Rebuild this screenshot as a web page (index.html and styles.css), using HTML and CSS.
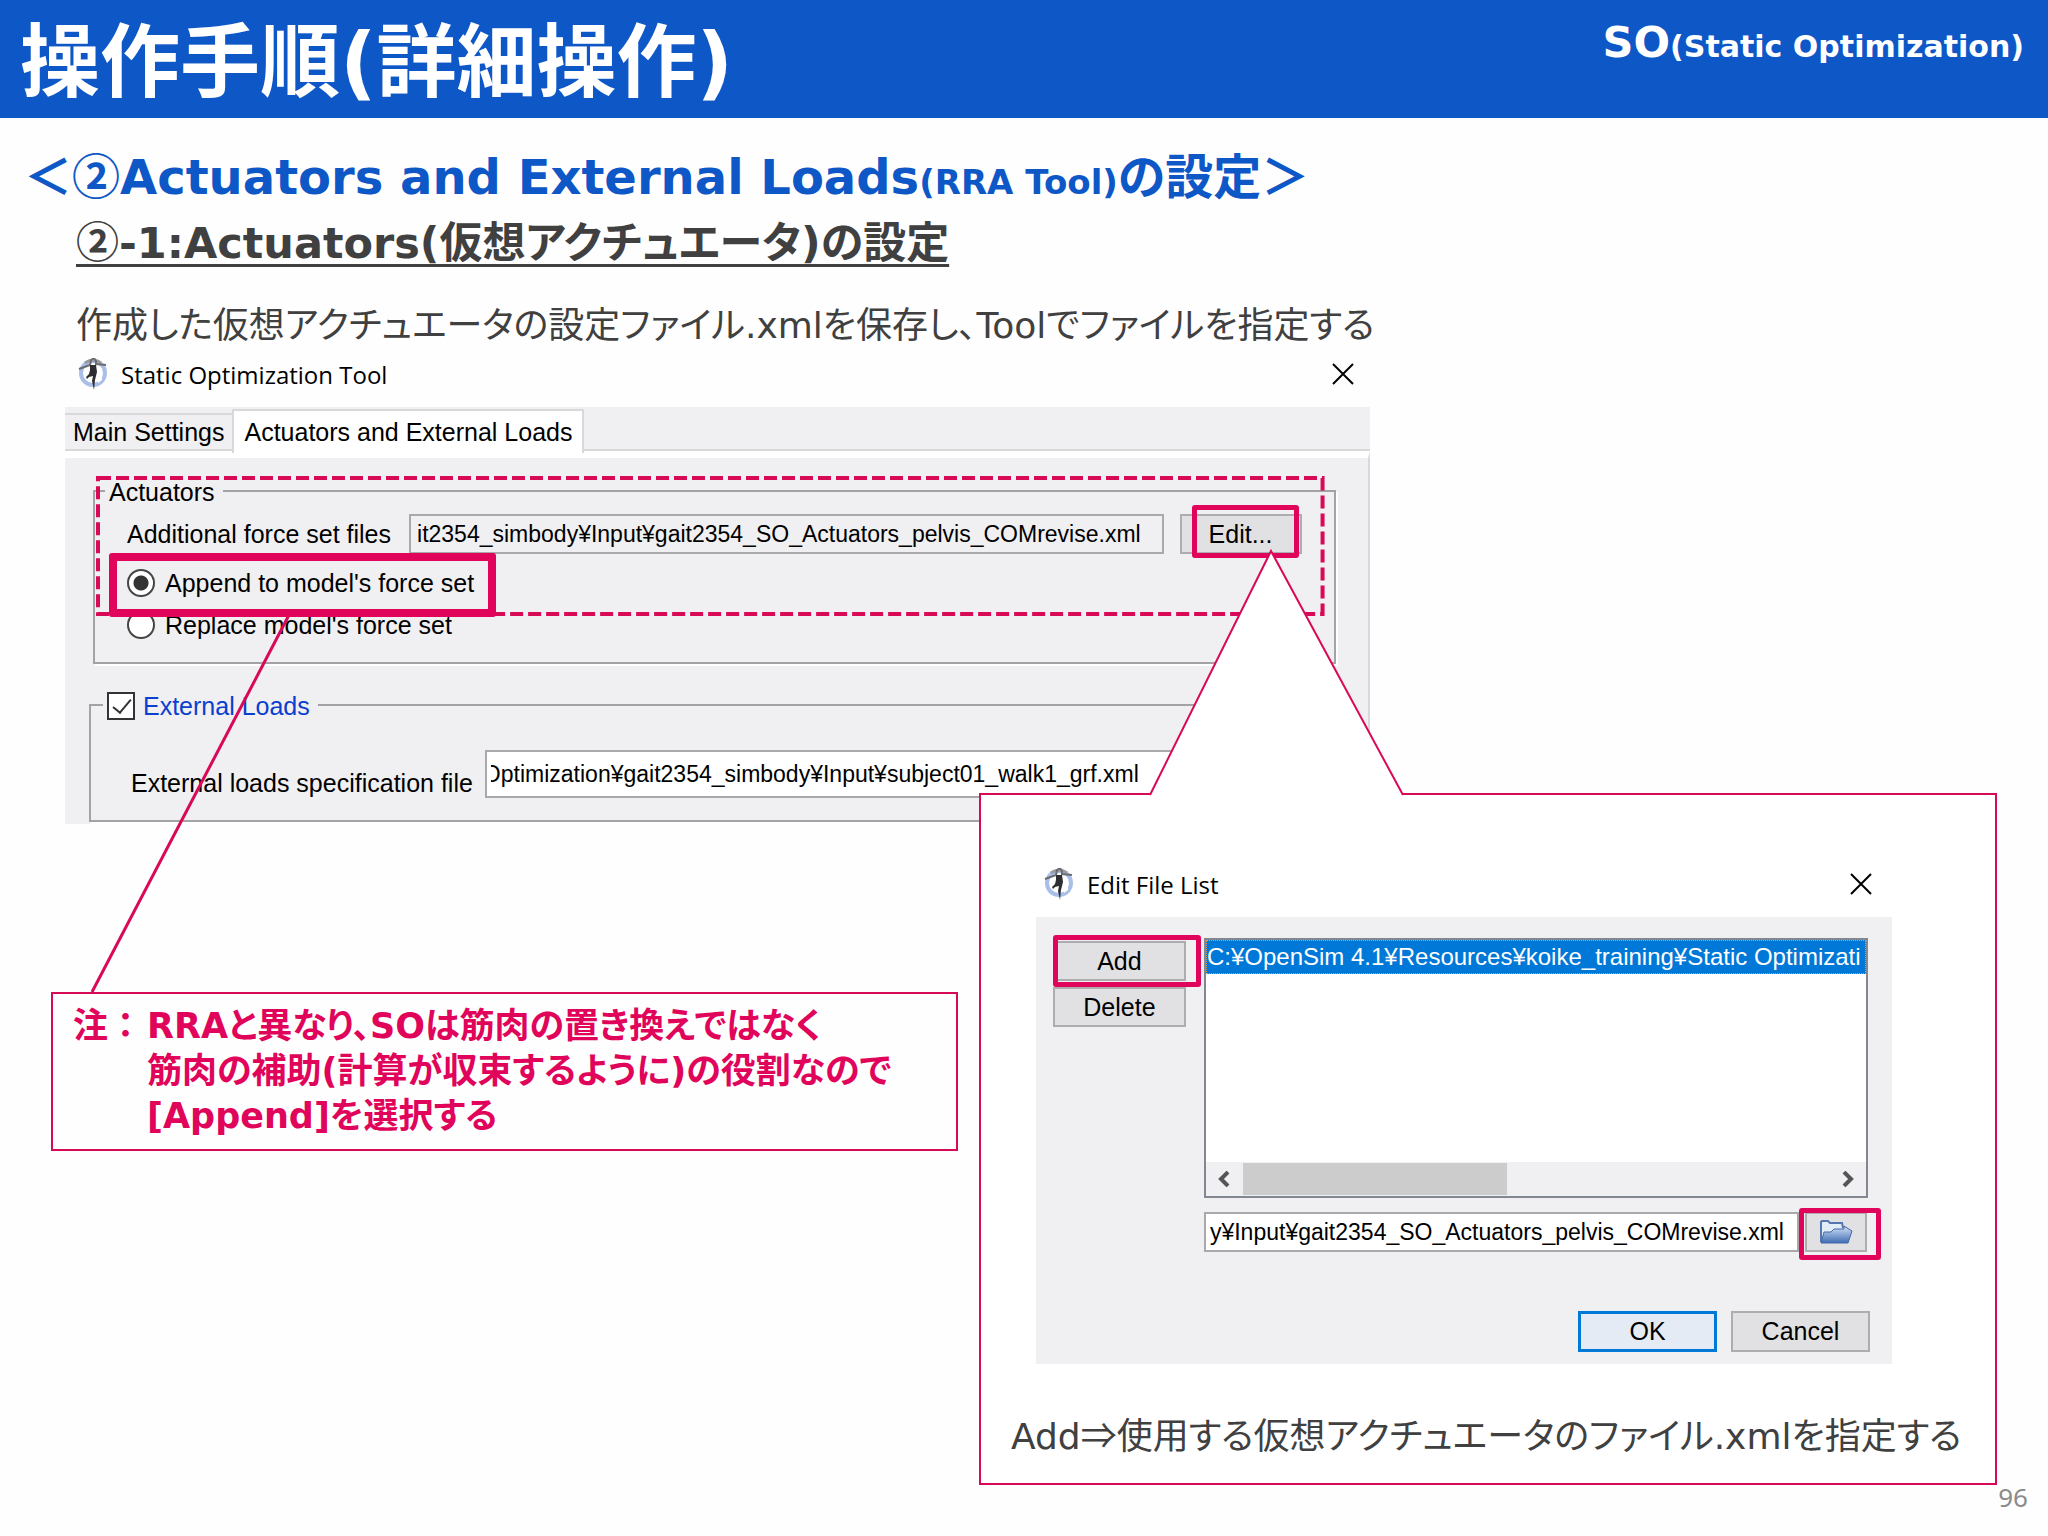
FILE: index.html
```html
<!DOCTYPE html>
<html lang="ja">

<head>
  <meta charset="UTF-8">
  <meta name="viewport" content="width=device-width, initial-scale=1.0">
  <title>操作手順(詳細操作)</title>
  <link rel="stylesheet" href="styles.css">
</head>

<body>

  <header class="topbar">
    <h1>操作手順(詳細操作)</h1>
    <p class="chapter">SO<small>(Static Optimization)</small></p>
  </header>

  <main>
    <div class="intro">
      <h2>＜<span class="cjk">②</span>Actuators and External Loads<small>(RRA Tool)</small>の設定＞</h2>
      <h3><span class="cjk">②</span>-1:Actuators(仮想アクチュエータ)の設定</h3>
      <p class="lead">作成した仮想アクチュエータの設定ファイル.xmlを保存し、Toolでファイルを指定する</p>
    </div>

    <div class="stage">
      <div class="left">

        <!-- Static Optimization Tool -->
        <section class="window tool">
          <div class="titlebar">
            <svg class="app-icon" viewBox="0 0 30 32" aria-hidden="true">
              <circle cx="15" cy="15" r="12" fill="#fff" stroke="#a9bfe8" stroke-width="4"/>
              <path d="M7 5a13 13 0 0 1 16 0" fill="none" stroke="#9a9aa0" stroke-width="3"/>
              <path d="M1 11l11-4 1-5 3-2 2 3v3l10 1" fill="none" stroke="#6b6b70" stroke-width="2"/>
              <path d="M12 7h6l1 7-2 8-1 10-2-9 1-5-4 1-2 2-1-2 3-3 1-4z" fill="#2e2e32"/>
              <path d="M20 10h4v12l-4 3z" fill="#fff"/>
            </svg>
            <span class="window-title">Static Optimization Tool</span>
            <button class="close" aria-label="Close"><svg viewBox="0 0 22 22"><path d="M1 1l20 20M21 1L1 21"/></svg></button>
          </div>

          <div class="tabs">
            <button class="tab">Main Settings</button>
            <button class="tab active">Actuators and External Loads</button>
          </div>

          <div class="panel">
            <div class="group actuators">
              <span class="legend">Actuators</span>
              <div class="row">
                <label for="force-files">Additional force set files</label>
                <input type="text" id="force-files" class="field readonly" readonly value="it2354_simbody¥Input¥gait2354_SO_Actuators_pelvis_COMrevise.xml">
                <span class="mark mark-edit"><button class="btn">Edit...</button></span>
              </div>
              <div class="options">
                <label class="option mark mark-append"><input type="radio" name="mode" checked>Append to model's force set</label>
                <label class="option"><input type="radio" name="mode">Replace model's force set</label>
              </div>
              <svg class="dashed" aria-hidden="true"><rect x="2" y="2" width="100%" height="100%"/></svg>
            </div>

            <div class="group loads">
              <label class="legend blue"><input type="checkbox" checked>External Loads</label>
              <div class="row">
                <label for="loads-file">External loads specification file</label>
                <input type="text" id="loads-file" class="field cut" value="Optimization¥gait2354_simbody¥Input¥subject01_walk1_grf.xml">
              </div>
            </div>
          </div>
        </section>

        <aside class="note">
          <span>注：</span>
          <p>RRAと異なり、SOは筋肉の置き換えではなく<br>筋肉の補助(計算が収束するように)の役割なので<br>[Append]を選択する</p>
        </aside>
      </div>

      <!-- Edit File List -->
      <section class="callout">
        <div class="window dialog">
          <div class="titlebar">
            <svg class="app-icon" viewBox="0 0 30 32" aria-hidden="true">
              <circle cx="15" cy="15" r="12" fill="#fff" stroke="#a9bfe8" stroke-width="4"/>
              <path d="M7 5a13 13 0 0 1 16 0" fill="none" stroke="#9a9aa0" stroke-width="3"/>
              <path d="M1 11l11-4 1-5 3-2 2 3v3l10 1" fill="none" stroke="#6b6b70" stroke-width="2"/>
              <path d="M12 7h6l1 7-2 8-1 10-2-9 1-5-4 1-2 2-1-2 3-3 1-4z" fill="#2e2e32"/>
              <path d="M20 10h4v12l-4 3z" fill="#fff"/>
            </svg>
            <span class="window-title">Edit File List</span>
            <button class="close" aria-label="Close"><svg viewBox="0 0 22 22"><path d="M1 1l20 20M21 1L1 21"/></svg></button>
          </div>

          <div class="dialog-body">
            <div class="side">
              <span class="mark mark-add"><button class="btn">Add</button></span>
              <button class="btn">Delete</button>
            </div>
            <div class="files">
              <div class="list">
                <div class="item">C:¥OpenSim 4.1¥Resources¥koike_training¥Static Optimizati</div>
                <div class="scrollbar">
                  <svg viewBox="0 0 14 16"><path d="M11 1L4 8l7 7"/></svg>
                  <div class="track"><div class="thumb"></div></div>
                  <svg viewBox="0 0 14 16"><path d="M3 1l7 7-7 7"/></svg>
                </div>
              </div>
              <div class="path">
                <input type="text" class="field" aria-label="File path" value="y¥Input¥gait2354_SO_Actuators_pelvis_COMrevise.xml">
                <span class="mark mark-folder">
                  <button class="btn" aria-label="Browse">
                    <svg viewBox="0 0 34 26">
                      <defs>
                        <linearGradient id="folder" x1="0" y1="0" x2="0" y2="1">
                          <stop offset="0" stop-color="#d5e4f7"/>
                          <stop offset="1" stop-color="#3f6cb2"/>
                        </linearGradient>
                      </defs>
                      <path d="M2 23V3l1-1h6l2 2h12l1 5" fill="#e3edfa" stroke="#5577b0" stroke-width="2"/>
                      <path d="M2 24l3-11h7l3-3h10V7l8 5-4 12z" fill="url(#folder)" stroke="#4468a6" stroke-width="1"/>
                    </svg>
                  </button>
                </span>
              </div>
            </div>
            <div class="actions">
              <button class="btn default">OK</button>
              <button class="btn">Cancel</button>
            </div>
          </div>
        </div>
        <p class="caption">Add<span class="cjk">⇒</span>使用する仮想アクチュエータのファイル.xmlを指定する</p>
      </section>

      <!-- leader line and callout tail -->
      <svg class="pointers" viewBox="0 0 2048 797" preserveAspectRatio="none" aria-hidden="true">
        <path class="leader" d="M289 264L92 641"/>
        <path class="tail" d="M1150 444L1271 200L1403 444"/>
      </svg>
    </div>
  </main>

  <footer>96</footer>

</body>

</html>
```

FILE: styles.css
```css
* {
  box-sizing: border-box;
}

body {
  margin: 0;
  background: #fefefe;
  color: #404040;
  font-family: "DejaVu Sans", "Noto Sans CJK JP", sans-serif;
  font-feature-settings: "palt";
}

h1, h2, h3, p {
  margin: 0;
}

button, input {
  font: inherit;
  color: inherit;
}

.cjk {
  font-family: "Noto Sans CJK JP", sans-serif;
  line-height: 1;
}

/* header */
.topbar {
  display: flex;
  justify-content: space-between;
  height: 118px;
  padding: 0 24px 0 20px;
  background: #0e57c6;
  color: #fff;
}

h1 {
  font-size: 80px;
  line-height: 126px;
}

.chapter {
  font-size: 43px;
  font-weight: bold;
  line-height: 84px;
}

.chapter small {
  font-size: 30px;
}

/* headings */
.intro {
  padding: 29px 24px 0;
}

h2 {
  color: #0e57c6;
  font-size: 48px;
  line-height: 60px;
}

h2 small {
  font-size: 34px;
}

h3 {
  margin-left: 52px;
  font-size: 43px;
  line-height: 62px;
  text-decoration: underline;
  text-decoration-thickness: 3px;
  text-underline-offset: 6px;
}

.lead {
  margin: 20px 0 0 52px;
  font-size: 36px;
  line-height: 64px;
}

.stage {
  position: relative;
  display: grid;
  margin-top: -7px;
}

.left, .callout {
  grid-area: 1 / 1;
}

/* windows */
.window {
  color: #000;
  font-family: "Liberation Sans", sans-serif;
  font-size: 25px;
}

.tool {
  width: 63.7%;
  margin-left: 65px;
}

.titlebar {
  display: flex;
  align-items: center;
  height: 56px;
  padding: 0 16px 10px 12px;
}

.app-icon {
  width: 32px;
  height: 32px;
}

.window-title {
  flex: 1;
  margin-left: 12px;
  font-family: "Open Sans", sans-serif;
  font-size: 24px;
}

.close {
  width: 22px;
  height: 22px;
  padding: 0;
  border: 0;
  background: none;
}

.close svg {
  display: block;
  fill: none;
  stroke: #000;
  stroke-width: 2;
}

.tabs {
  display: flex;
  align-items: flex-end;
  height: 44px;
  background: #f0eff1;
  border-bottom: 2px solid #d9d9db;
}

.tab {
  height: 36px;
  padding: 0 8px;
  border: 2px solid #d9d9db;
  border-width: 2px 0 0;
  background: #f0eff1;
  white-space: nowrap;
}

.tab.active {
  height: 44px;
  margin-bottom: -4px;
  padding: 0 10px;
  border-width: 2px 2px 0;
  background: #fff;
}

.panel {
  padding: 32px 32px 2px 24px;
  border-top: 7px solid #fff;
  border-right: 2px solid #d9d9db;
  background: #f0eff1;
}

.group {
  position: relative;
  border: 2px solid #a3a3a5;
  box-shadow: 2px 2px 0 #fff;
}

.actuators {
  height: 174px;
  margin-left: 4px;
  padding: 22px 32px 0;
}

.actuators .row label {
  margin-right: 6px;
}

.loads {
  height: 118px;
  margin-top: 40px;
  padding: 44px 32px 0 40px;
}

.legend {
  position: absolute;
  top: -16px;
  left: 10px;
  padding: 0 8px 0 4px;
  background: #f0eff1;
  line-height: 32px;
}

.blue {
  display: flex;
  gap: 8px;
  align-items: center;
  left: 12px;
  color: #0a3fd0;
}

.row {
  display: flex;
  align-items: center;
  gap: 12px;
  white-space: nowrap;
}

.loads .row {
  align-items: flex-end;
}

.field {
  flex: 1;
  min-width: 0;
  height: 40px;
  padding: 0 6px;
  border: 2px solid #a9a9ab;
  border-radius: 0;
  background: #fff;
  font-size: 23px;
}

.readonly {
  background: #f0eff1;
}

.cut {
  height: 48px;
  padding: 0 4px;
  text-indent: -8px;
}

.btn {
  height: 40px;
  border: 2px solid #adadaf;
  border-radius: 0;
  background: #e1e0e2;
}

.options {
  margin-top: 8px;
}

.option {
  display: flex;
  align-items: center;
  gap: 10px;
  width: max-content;
  line-height: 42px;
}

input[type=radio] {
  appearance: none;
  width: 28px;
  height: 28px;
  margin: 0;
  border: 2px solid #444;
  border-radius: 50%;
  background: #fff;
}

input[type=radio]:checked {
  background: radial-gradient(#333 0 7px, #fff 8px);
}

input[type=checkbox] {
  appearance: none;
  width: 28px;
  height: 28px;
  margin: 0;
  border: 2px solid #333;
  background: #fff;
}

input[type=checkbox]:checked::before {
  content: "";
  display: block;
  width: 8px;
  height: 16px;
  margin: 1px 0 0 8px;
  border: solid #333;
  border-width: 0 2px 2px 0;
  transform: rotate(40deg);
}

/* red marks */
.mark {
  position: relative;
}

.mark::after {
  content: "";
  position: absolute;
  z-index: 1;
  inset: -6px;
  border: 5px solid #e0045a;
  border-radius: 3px;
  pointer-events: none;
}

.mark-edit .btn {
  width: 122px;
  margin-left: 4px;
}

.mark-edit::after {
  inset: -9px 3px -4px 16px;
}

.mark-append::after {
  inset: -9px -22px -13px -18px;
  border-width: 8px;
}

.mark-add::after {
  inset: -6px -15px -6px 0;
}

.mark-folder {
  display: flex;
}

.mark-folder::after {
  inset: -4px -14px -8px -6px;
}

.dashed {
  position: absolute;
  top: -16px;
  left: 1px;
  width: calc(100% - 10px);
  height: 140px;
}

.dashed rect {
  width: calc(100% - 4px);
  height: calc(100% - 4px);
  fill: none;
  stroke: #d80a58;
  stroke-width: 4;
  stroke-dasharray: 13 5;
}

/* note */
.note {
  display: flex;
  width: 44.3%;
  margin: 168px 0 0 51px;
  padding: 10px 20px;
  border: 2px solid #d80a58;
  color: #e0045a;
  font-size: 35px;
  font-weight: bold;
  line-height: 45px;
  white-space: nowrap;
}

.note span {
  width: 74px;
  font-feature-settings: normal;
}

/* callout */
.callout {
  position: relative;
  z-index: 1;
  margin: 442px 51px 0 47.8%;
  padding: 66px 30px 14px;
  border: 2px solid #d80a58;
  background: #fff;
}

.dialog {
  margin: 0 73px 0 25px;
}

.dialog .titlebar {
  padding: 0 20px 10px 7px;
}

.dialog-body {
  display: grid;
  grid-template-columns: 133px minmax(0, 1fr);
  gap: 14px 18px;
  padding: 21px 22px 12px 17px;
  background: #f0eff1;
}

.side {
  display: flex;
  flex-direction: column;
  gap: 6px;
  padding-top: 3px;
}

.side .btn {
  display: block;
  width: 100%;
}

.list {
  display: flex;
  flex-direction: column;
  justify-content: space-between;
  height: 260px;
  margin-right: 2px;
  border: 2px solid #828790;
  background: #fff;
}

.item {
  overflow: hidden;
  background: #0078d7;
  border: 1px dotted #e89a4a;
  color: #fff;
  font-size: 24px;
  line-height: 32px;
  white-space: nowrap;
}

.scrollbar {
  display: flex;
  align-items: center;
  height: 34px;
  padding: 0 11px;
  background: #f0eff1;
}

.scrollbar svg {
  width: 14px;
  height: 16px;
  fill: none;
  stroke: #555;
  stroke-width: 4;
}

.track {
  flex: 1;
  height: 32px;
  margin: 0 12px;
}

.thumb {
  width: 45%;
  height: 100%;
  background: #cdcccd;
}

.path {
  display: flex;
  gap: 6px;
  margin: 14px 3px 0 0;
}

.path .btn {
  width: 62px;
  padding: 0;
}

.path svg {
  display: block;
  width: 34px;
  height: 26px;
  margin: auto;
}

.path .field {
  padding: 0 4px;
}

.actions {
  grid-column: 1 / 3;
  display: flex;
  justify-content: flex-end;
  gap: 14px;
  margin-top: 45px;
}

.actions .btn {
  width: 139px;
  height: 41px;
}

.actions .default {
  border: 3px solid #0078d7;
  background: #e5ebf5;
}

.caption {
  margin-top: 41px;
  font-size: 36px;
  line-height: 64px;
  white-space: nowrap;
}

.pointers {
  position: absolute;
  z-index: 2;
  top: 0;
  left: 0;
  width: 100%;
  height: 797px;
  pointer-events: none;
}

.leader {
  fill: none;
  stroke: #d80a58;
  stroke-width: 3;
}

.tail {
  fill: #fff;
  stroke: #d80a58;
  stroke-width: 2;
}

footer {
  padding: 0 20px 26px;
  color: #8b8b8b;
  font-family: "Noto Sans", sans-serif;
  font-size: 26px;
  line-height: 24px;
  text-align: right;
}
```
